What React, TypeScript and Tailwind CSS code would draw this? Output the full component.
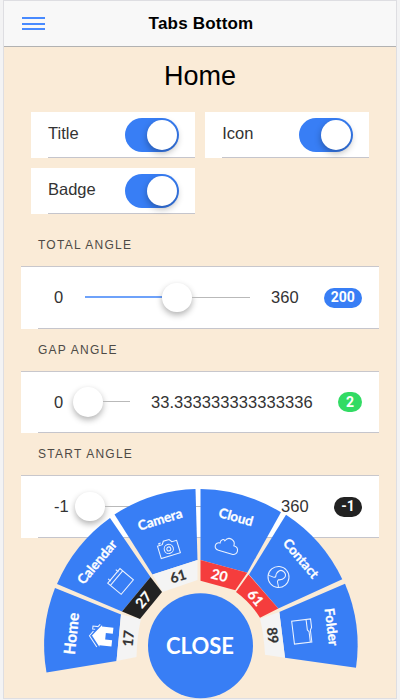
import React from "react";

function Toggle() {
  return (
    <div className="flex h-[34px] w-[54px] items-center justify-end rounded-full bg-[#387ef5] pr-[2px]">
      <div className="h-[30px] w-[30px] rounded-full bg-white shadow-[0_3px_7px_rgba(0,0,0,0.3)]" />
    </div>
  );
}

function ToggleCard({ label }: { label: string }) {
  return (
    <div className="h-[46px] bg-white pl-[17px]">
      <div className="flex h-full items-center justify-between border-b border-[#c5c5cc] pr-4">
        <span className="pb-[3px] text-[16.5px] leading-5">{label}</span>
        <Toggle />
      </div>
    </div>
  );
}

interface RangeProps {
  title: string;
  min: string;
  max: string;
  value: string;
  filled?: boolean;
  badge: string;
  track: string;
  knob: string;
}

function RangeSection({ title, min, max, value, filled, badge, track, knob }: RangeProps) {
  return (
    <section className="h-[104.6px]">
      <h2 className="h-[42px] pl-[17px] pt-[11px] text-[12px] leading-[20px] tracking-[1.25px] text-[#4d4a46]">{title}</h2>
      <div className="h-[62.6px] border-t border-[#c8c7cc] bg-white pl-[17px]">
        <div className="flex h-full items-center border-b border-[#c5c5cc] pr-[17px] text-[16.5px]">
          <span className="w-[31px] pl-4 leading-5">{min}</span>
          <div className={`flex h-[30px] items-center ${track}`}>
            {filled && <div className="h-[2px] w-[77px] shrink-0 bg-[#6ea2fa]" />}
            <div className={`h-[29.5px] w-[29.5px] shrink-0 rounded-full bg-white shadow-[0_3px_6px_rgba(0,0,0,0.3)] ${knob}`} />
            <div className="h-px flex-1 bg-[#b9b9b9]" />
          </div>
          <span className="ml-[21px] whitespace-nowrap leading-5 tracking-[0.06px]">{max}</span>
          <span className={`ml-auto mt-px flex h-[20px] items-center justify-center rounded-full font-['Roboto',sans-serif] text-[14px] font-bold text-white ${badge}`}>
            {value}
          </span>
        </div>
      </div>
    </section>
  );
}

const segments = [
  {
    label: "Home", size: 15.6, count: "17", angle: -84,
    shape: "M46.5 672.5A157 157 0 0 1 55 588L121 614.5L116.5 661Z",
    tag: "M116.5 661L121 614.5L141 619Q137 635 136.5 657Z",
    tagFill: "#f4f4f4", tagText: "#333", text: [71.5, 633.5], icon: [101.5, 636], num: [128.5, 638.5],
    drawing: (
      <>
        <path d="M-11-1L-0.5-9.5L11-0.5H9.5V11H3.5V4H-3V11H-9.5V-1Z" fill="#fff" stroke="none" />
        <path d="M-11.5-3.5L-1-12L4-8.5M6-7V-9.5H9V-4.5L11.5-2.5" />
      </>
    ),
  },
  {
    label: "Calendar", size: 13.4, count: "27", angle: -50,
    shape: "M57 584A157 157 0 0 1 110 518L150.5 577L122 611.5Z",
    tag: "M122 611.5L150.5 577L162 592L140 619Z",
    tagFill: "#222", tagText: "#fff", text: [97, 562], icon: [120, 581], num: [143.5, 600],
    drawing: <path d="M-9.5-8H9.5V9.5H-9.5ZM-9.5-4.5H9.5M-6-7V-10.5M6-7V-10.5" />,
  },
  {
    label: "Camera", size: 13.4, count: "61", angle: -17,
    shape: "M114.5 514.5A157 157 0 0 1 195.5 489L197.5 560L152.5 574.5Z",
    tag: "M152.5 574.5L197.5 560V580L162.5 592Z",
    tagFill: "#f4f4f4", tagText: "#333", text: [160, 519.5], icon: [168.5, 548], num: [178, 576.5],
    drawing: (
      <>
        <path d="M-10-5H-5L-3-8H3L5-5H10V8H-10ZM-8-5V-7H-6" />
        <circle cx="0" cy="1" r="4.6" />
        <circle cx="0" cy="1" r="2" />
      </>
    ),
  },
  {
    label: "Cloud", size: 13.4, count: "20", angle: 16,
    shape: "M200.5 489A157 157 0 0 1 281 512.3L247.3 572.7L200.5 560Z",
    tag: "M200.5 560L247.3 572.7L235.3 590.3L200.5 580.7Z",
    tagFill: "#f53d3d", tagText: "#fff", text: [236, 517], icon: [227, 546], num: [219.5, 575.5],
    drawing: <path d="M-7 6.5C-13 6-12.5-1-7.5-1C-8-5-5-6-3.5-4.5C-1-10.5 7-8 6.5-2C13-2 13 6.5 7 6.5Z" />,
  },
  {
    label: "Contact", size: 13.4, count: "61", angle: 50,
    shape: "M286 514.7A157 157 0 0 1 342.3 579.3L278.3 608.5L249 574.5Z",
    tag: "M248.5 574.5L278.3 608.5L260 617.7Q250 602 236 592Z",
    tagFill: "#f53d3d", tagText: "#fff", text: [301, 558.5], icon: [278.5, 577], num: [255.5, 598],
    drawing: (
      <>
        <circle cx="0" cy="0" r="10.5" />
        <path d="M-7.5 6.5C-5 4-2 5-2 2C-6-2-5-7.5 0-7.5C5-7.5 6-2 2 2C2 5 5 4 7.5 6.5" />
      </>
    ),
  },
  {
    label: "Folder", size: 13.4, count: "89", angle: 83,
    shape: "M345 583.7A157 157 0 0 1 356 667.7L285 657.7L279.3 612Z",
    tag: "M279.3 612L285 657.7L265 654.7Q264 635 260 618.7Z",
    tagFill: "#f4f4f4", tagText: "#333", text: [331.5, 627], icon: [302.5, 631.5], num: [272.5, 635.5],
    drawing: <path d="M-11.5-9.5H-3L-0.5-8H11.5V9.5H-11.5ZM-11.5-5H-1L1-6.5H11.5" />,
  },
];

function RadialMenu() {
  return (
    <svg className="pointer-events-none absolute left-0 top-0" width="400" height="700" viewBox="0 0 400 700" fontFamily="Lato, sans-serif" fontWeight="700" textAnchor="middle">
      {segments.map((s) => (
        <g key={s.label}>
          <path d={s.shape} fill="#387ef5" />
          <path d={s.tag} fill={s.tagFill} />
          <text transform={`translate(${s.text[0]} ${s.text[1]}) rotate(${s.angle})`} y={s.size * 0.35} fontSize={s.size} fill="#fff" stroke="#fff" strokeWidth="0.3">{s.label}</text>
          <g transform={`translate(${s.icon[0]} ${s.icon[1]}) rotate(${s.angle})`} fill="none" stroke="#fff" strokeOpacity="0.9" strokeWidth="1.05">{s.drawing}</g>
          <text transform={`translate(${s.num[0]} ${s.num[1]}) rotate(${s.angle})`} y="4.8" fontSize="14" fill={s.tagText} stroke={s.tagText} strokeWidth="0.2">{s.count}</text>
        </g>
      ))}
      <circle cx="200.5" cy="645.7" r="52.5" fill="#387ef5" />
      <text x="200" y="653.5" fontSize="22" fill="#fff">CLOSE</text>
    </svg>
  );
}

export default function App() {
  return (
    <div className="relative h-[700px] w-[400px] overflow-hidden bg-[#f3f3f4] px-1 pt-px font-['Liberation_Sans',Arial,sans-serif] text-[#333]">
      <div className="h-[697px] bg-[#faebd7] shadow-[0_0_0_1px_#dedee2]">
        <header className="flex h-[46px] items-center border-b border-[#b2b2b2] bg-[#f8f8f8] text-black">
          <div className="flex w-[60px] flex-col gap-[3.5px] pl-[18px]">
            <div className="h-[2px] w-[23px] bg-[#488aff]" />
            <div className="h-[2px] w-[23px] bg-[#488aff]" />
            <div className="h-[2px] w-[23px] bg-[#488aff]" />
          </div>
          <h1 className="flex-1 pr-[58px] text-center text-[17px] font-bold tracking-[0.2px]">Tabs Bottom</h1>
        </header>
        <main className="px-[17px]">
          <div className="h-[65px] pt-[13px] text-center text-[27px] leading-[32px] text-black">Home</div>
          <div className="ml-[10px] grid w-[338px] grid-cols-2 gap-x-[10.5px] gap-y-[10px]">
            <ToggleCard label="Title" />
            <ToggleCard label="Icon" />
            <ToggleCard label="Badge" />
          </div>
          <div className="mt-[10px]">
            <RangeSection title="TOTAL ANGLE" min="0" max="360" value="200" filled badge="bg-[#387ef5] w-[38.5px]" track="ml-[16px] w-[165px]" knob="" />
            <RangeSection title="GAP ANGLE" min="0" max="33.333333333333336" value="2" badge="bg-[#32db64] w-[24px]" track="ml-[16px] w-[45px]" knob="-ml-[12px]" />
            <RangeSection title="START ANGLE" min="-1" max="360" value="-1" badge="bg-[#222] w-[28px]" track="ml-[21px] w-[170px]" knob="-ml-[15px]" />
          </div>
        </main>
      </div>
      <RadialMenu />
    </div>
  );
}
